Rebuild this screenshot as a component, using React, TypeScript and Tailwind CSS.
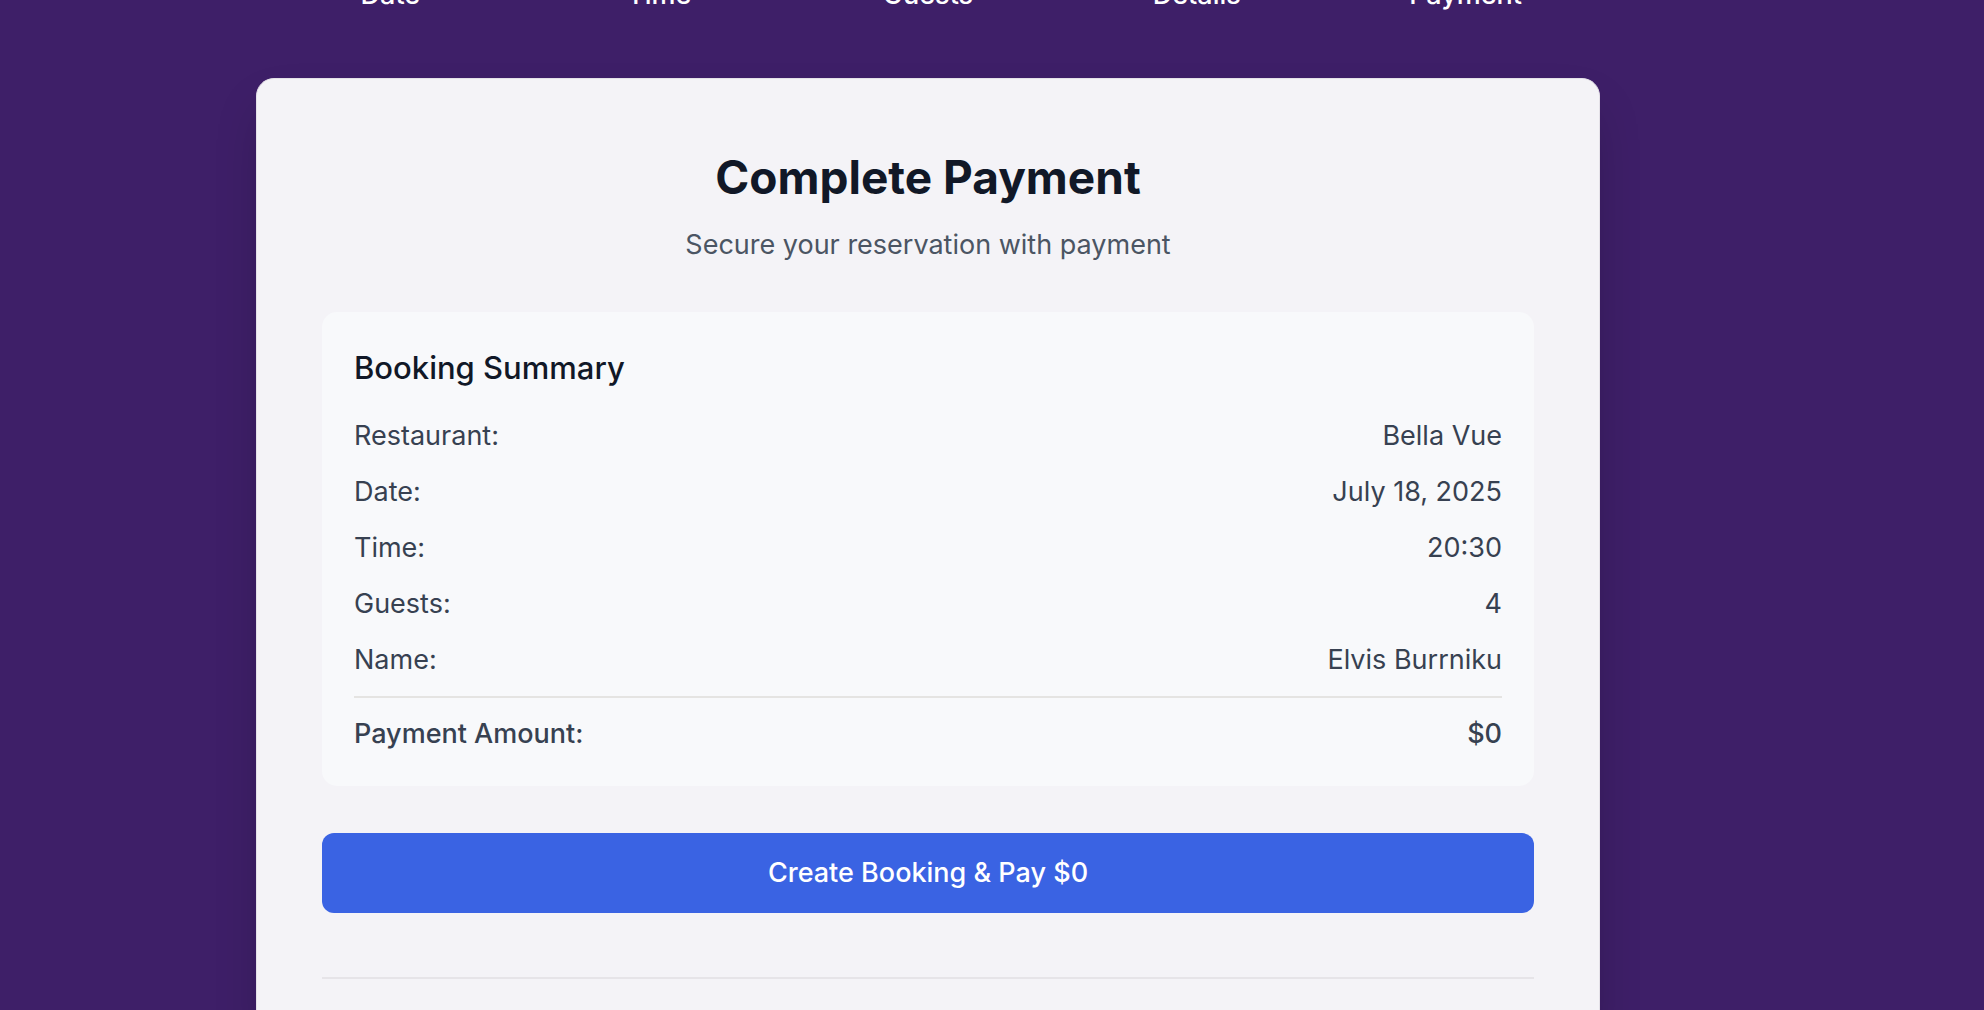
const steps = ["Date", "Time", "Guests", "Details", "Payment"];

const summary = [
  { label: "Restaurant:", value: "Bella Vue" },
  { label: "Date:", value: "July 18, 2025" },
  { label: "Time:", value: "20:30" },
  { label: "Guests:", value: "4" },
  { label: "Name:", value: "Elvis Burrniku" },
];

export default function App() {
  return (
    <div
      className="h-screen overflow-hidden bg-[#3e1f68]"
      style={{ fontFamily: "Inter, 'Noto Sans', sans-serif" }}
    >
      <div className="ml-[256px] w-[1344px]">
        {/* step labels, scrolled mostly out of view */}
        <div className="-mt-[25px] grid grid-cols-5 text-center text-[27px] leading-[40px] font-medium text-white">
          {steps.map((s) => (
            <div key={s}>{s}</div>
          ))}
        </div>

        <div className="mt-[63px] rounded-[18px] border border-[#e4e1e8] bg-[#f4f3f7] px-[65px] pt-[71px] pb-16 shadow-2xl">
          <div className="text-center">
            <h1 className="text-[46px] leading-[54px] font-bold text-[#111827]">
              Complete Payment
            </h1>
            <p className="mt-[21px] text-[27px] leading-[40px] text-[#4b5563]">
              Secure your reservation with payment
            </p>
          </div>

          <div className="mt-[47px] rounded-[15px] bg-[#f8f9fb] p-8">
            <h2 className="text-[31px] leading-[48px] font-medium text-[#111827]">
              Booking Summary
            </h2>
            <div className="mt-6 flex flex-col gap-4">
              {summary.map((r) => (
                <div
                  key={r.label}
                  className="flex justify-between text-[27px] leading-[40px] text-[#374151]"
                >
                  <span>{r.label}</span>
                  <span>{r.value}</span>
                </div>
              ))}
              <div className="flex justify-between border-t-2 border-[#e5e4e2] pt-4 text-[27px] leading-[40px] font-medium text-[#374151]">
                <span>Payment Amount:</span>
                <span>$0</span>
              </div>
            </div>
          </div>

          <button className="mt-[47px] flex h-[80px] w-full items-center justify-center rounded-[12px] bg-[#3a63e3] text-[27px] font-medium text-white">
            Create Booking &amp; Pay $0
          </button>

          <div className="mt-16 border-t-2 border-[#e6e4e8]" />
        </div>
      </div>
    </div>
  );
}
